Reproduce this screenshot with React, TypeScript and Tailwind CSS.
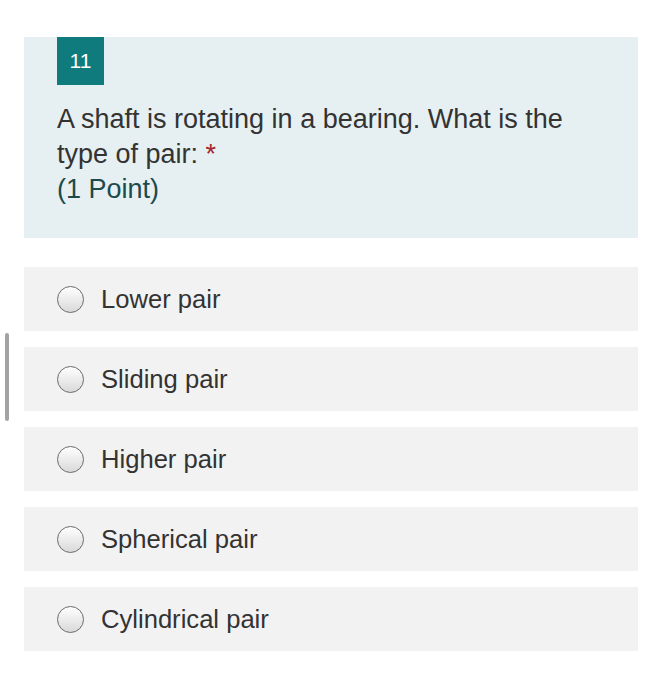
const options = ['Lower pair', 'Sliding pair', 'Higher pair', 'Spherical pair', 'Cylindrical pair'];

function Radio() {
  return (
    <span className="block h-[27px] w-[27px] shrink-0 rounded-full border-[1.5px] border-[#6b6b6b] bg-gradient-to-b from-white to-[#d9d9d9]" />
  );
}

export default function App() {
  return (
    <div className="relative min-h-[700px] bg-white pt-[37px] px-[24px] pb-[48px] font-['Liberation_Sans',Arial,sans-serif] text-[#333333]">
      <div className="absolute left-[5px] top-[333px] h-[88px] w-[4px] rounded-full bg-[#a3a3a3]" />
      <div className="w-[614px] bg-[#e6eff1] pl-[33px] pr-[33px] pb-[31px]">
        <div className="flex h-[48px] w-[47px] items-center justify-center bg-[#0f7b7d] text-[21px] text-white">11</div>
        <div className="mt-[17px] text-[27px] leading-[35px]">
          <div>
            A shaft is rotating in a bearing. What is the type of pair: <span className="text-[#a4262c]">*</span>
          </div>
          <div className="text-[#1c4a4c]">(1 Point)</div>
        </div>
      </div>
      <div className="mt-[29px] flex w-[614px] flex-col gap-[16px]">
        {options.map((o) => (
          <div key={o} className="flex h-[64px] items-center gap-[17px] bg-[#f2f2f2] pl-[33px]">
            <Radio />
            <span className="pt-[2px] text-[25.6px] leading-none">{o}</span>
          </div>
        ))}
      </div>
    </div>
  );
}
